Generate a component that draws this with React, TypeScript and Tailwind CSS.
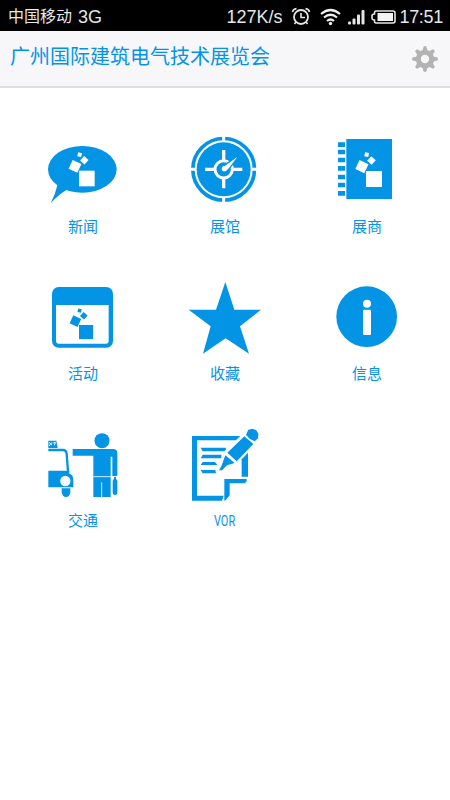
import type { ReactNode } from 'react';

const BLUE = '#0394e6';

// Cluster of tumbling squares shared by several icons
function Squares({ x, y, scale = 1, fill = '#fff' }: { x: number; y: number; scale?: number; fill?: string }) {
    return (
        <g transform={`translate(${x} ${y}) scale(${scale})`} fill={fill}>
            <rect width="47" height="47" />
            <rect x="-14.5" y="-14.5" width="29" height="29" transform="translate(-12 -13) rotate(25)" />
            <rect x="-9" y="-9" width="18" height="18" transform="translate(16 -31) rotate(42)" />
            <rect x="-6" y="-6" width="12" height="12" transform="translate(2 -48) rotate(12)" />
        </g>
    );
}

const menuItems: { label: string; viewBox: string; icon: ReactNode }[] = [
    {
        label: '新闻',
        viewBox: '24 15 240 240',
        icon: (
            <>
                <ellipse cx="142" cy="133" rx="103" ry="70" />
                <path d="M68 178 Q62 205 47 235 Q70 208 100 192Z" />
                <Squares x={132} y={137} />
            </>
        ),
    },
    {
        label: '展馆',
        viewBox: '15 15 240 240',
        icon: (
            <>
                <circle cx="131" cy="133" r="92.5" fill="none" stroke={BLUE} strokeWidth="11" />
                <path d="M131 30V55M131 211V236M28 133H53M209 133H234" stroke="#fff" strokeWidth="9" />
                <circle cx="131" cy="133" r="81" />
                <path d="M131 75V107M131 159V190M75 133H105M157 133H187" stroke="#fff" strokeWidth="10" />
                <circle cx="131" cy="133" r="26" fill="none" stroke="#fff" strokeWidth="9" />
                <path d="M182 86L148 131Q140 141 130 138Q122 128 133 121Z" fill="#fff" stroke={BLUE} strokeWidth="4" />
                <circle cx="133" cy="131" r="8" fill="#fff" />
            </>
        ),
    },
    {
        label: '展商',
        viewBox: '21 15 240 240',
        icon: (
            <>
                <rect x="79" y="42" width="137" height="180" />
                <path d="M54 59H75M54 81H75M54 105H75M54 130H75M54 156H75M54 180H75M54 205H75" stroke={BLUE} strokeWidth="14" />
                <Squares x={138} y={138} scale={1.02} />
            </>
        ),
    },
    {
        label: '活动',
        viewBox: '24 6 240 240',
        icon: (
            <>
                <rect x="51" y="36" width="183" height="182" rx="20" />
                <path d="M63 90H221V197Q221 206 212 206H72Q63 206 63 197Z" fill="#fff" />
                <Squares x={132} y={150} scale={0.9} fill={BLUE} />
            </>
        ),
    },
    {
        label: '收藏',
        viewBox: '15 6 240 240',
        icon: <path d="M136 21L163 104H243L180 154L207 236L137 190L69 236L92 154L26 104H108Z" />,
    },
    {
        label: '信息',
        viewBox: '21 6 240 240',
        icon: (
            <>
                <circle cx="140" cy="125" r="91" />
                <circle cx="141" cy="86" r="12" fill="#fff" />
                <rect x="129" y="104" width="24" height="76" rx="3" fill="#fff" />
            </>
        ),
    },
    {
        label: '交通',
        viewBox: '24 12 240 240',
        icon: (
            <>
                {/* taxi */}
                <path d="M40 62H64L68 84H40Z" />
                <path d="M42 67L51 75M51 67L42 78M55 69L61 67L58 76" stroke="#fff" strokeWidth="3" fill="none" />
                <path d="M40 90H84Q94 90 95 102L99 155" fill="none" stroke={BLUE} strokeWidth="7" />
                <path d="M40 152H103V161Q115 164 115 180V202H40Z" />
                <path d="M80 205H106V217Q104 231 93 231Q82 231 80 217Z" />
                <circle cx="91" cy="183" r="15.5" fill="#fff" />
                {/* passenger */}
                <circle cx="201" cy="62" r="22.5" />
                <path d="M113 87H236Q247 88 247 100V168H232V110H227V231H175V107H113Z" />
                <path d="M175 170H227M200 187V231" stroke="#fff" strokeWidth="2.5" />
                <path d="M237 177V171H243V177Q247 179 247 184V217Q247 225 240 225Q233 225 233 217V184Q233 179 237 177Z" />
            </>
        ),
    },
    {
        label: 'VOR',
        viewBox: '15 12 240 240',
        icon: (
            <>
                <path d="M36 48H181L168 61H51V227H131L126 242H36Z" />
                <path d="M133 177H200V184L194 190H149V226L137 241L133 242Z" />
                <path d="M185 118L204 98V170H185Z" />
                <path d="M62 83H136L139 88L133 94H68ZM68 104H124V115H62ZM68 126H105L112 135H62ZM62 150H106L108 160H68Z" />
                <path d="M193 49L220 72L170 124L142 98Z" />
                <path d="M136 106L164 129L141 136L126 151H117L124 139Z" />
                <path d="M205 29L218 26L229 31L235 41L234 55L224 64L210 57L198 45Z" />
            </>
        ),
    },
];

function StatusBar() {
    return (
        <div className="flex h-[31px] items-center justify-between bg-black pt-0.5 pr-2 pl-2 font-['Liberation_Sans','Noto_Sans_CJK_SC',sans-serif] text-[18px] leading-none whitespace-nowrap text-gray-200">
            <div className="flex items-center gap-1.5">
                <span className="text-[16px]">中国移动</span>
                <span>3G</span>
            </div>
            <div className="flex items-center">
                <span className="mr-[9px]">127K/s</span>
                <svg className="mr-[9px]" width="20" height="20" viewBox="0 0 20 20" fill="none" stroke="#e5e5e5" strokeWidth="1.8">
                    <circle cx="10" cy="10" r="7" />
                    <path d="M10 6V10.5H14M1.5 5Q2 2 5.5 1.6M18.5 5Q18 2 14.5 1.6M5 15L3.5 17M15 15L16.5 17" strokeWidth="1.6" />
                </svg>
                <svg className="mr-[7px]" width="21" height="18" viewBox="0 0 21 18" fill="none" stroke="#eee" strokeWidth="2.2">
                    <path d="M1 6Q10.500-2 20 6M4 9.500Q10.500 4 17 9.500M7 13Q10.500 10 14 13" />
                    <circle cx="10.5" cy="15.500" r="1.700" fill="#eee" stroke="none" />
                </svg>
                <svg className="mr-[6px]" width="17" height="16" viewBox="0 0 17 16" fill="#e5e5e5">
                    <rect y="12.500" width="3" height="3" rx="1" />
                    <rect x="4.500" y="9.500" width="3" height="6" rx="1" />
                    <rect x="9" y="5.500" width="3" height="10" rx="1" />
                    <rect x="13.500" y="1" width="3" height="14.500" rx="1" />
                </svg>
                <svg className="mr-[3px]" width="25" height="14" viewBox="0 0 25 14">
                    <path d="M5 1H22Q24 1 24 3V11Q24 13 22 13H5Q3.500 13 3.500 11V10Q1 10 1 8V6Q1 4 3.500 4V3Q3.500 1 5 1Z" fill="#000" stroke="#e5e5e5" strokeWidth="1.600" />
                    <rect x="6.500" y="3" width="15.500" height="8" fill="#f5f5f5" />
                </svg>
                <span className="-mr-px tracking-[-0.3px]">17:51</span>
            </div>
        </div>
    );
}

function GearIcon() {
    return (
        <svg width="26" height="26" viewBox="-13 -13 26 26" fill="#b3b3b3">
            {[0, 45, 90, 135, 180, 225, 270, 315].map((angle) => (
                <path key={angle} d="M-2.600-8L-1.400-12.500Q0-13.300 1.400-12.500L2.600-8Z" transform={`rotate(${angle})`} />
            ))}
            <circle r="6.700" fill="none" stroke="#b3b3b3" strokeWidth="5" />
        </svg>
    );
}

export default function App() {
    return (
        <div className="h-[800px] w-[450px] overflow-hidden bg-white font-['Noto_Sans_CJK_SC',sans-serif]">
            <StatusBar />
            <header className="flex h-[57px] items-center justify-between border-b-2 border-[#dedede] bg-[#f7f7fa] pr-3 pl-2.5">
                <h1 className="mb-[5px] text-[20px] leading-none font-normal text-[#0394e6]">广州国际建筑电气技术展览会</h1>
                <GearIcon />
            </header>
            <main className="grid grid-cols-3 px-3 pt-[42px]">
                {menuItems.map((item) => (
                    <div key={item.label} className="flex h-[147px] flex-col items-center">
                        <svg width="80" height="80" viewBox={item.viewBox} fill={BLUE}>
                            {item.icon}
                        </svg>
                        {item.label === 'VOR' ? (
                            <span className="mt-2 scale-x-[0.78] font-[Roboto,sans-serif] text-[14px] leading-[18px] text-[#0394e6]">{item.label}</span>
                        ) : (
                            <span className="mt-[7px] text-[15px] leading-[18px] font-normal text-[#0394e6]">{item.label}</span>
                        )}
                    </div>
                ))}
            </main>
        </div>
    );
}
